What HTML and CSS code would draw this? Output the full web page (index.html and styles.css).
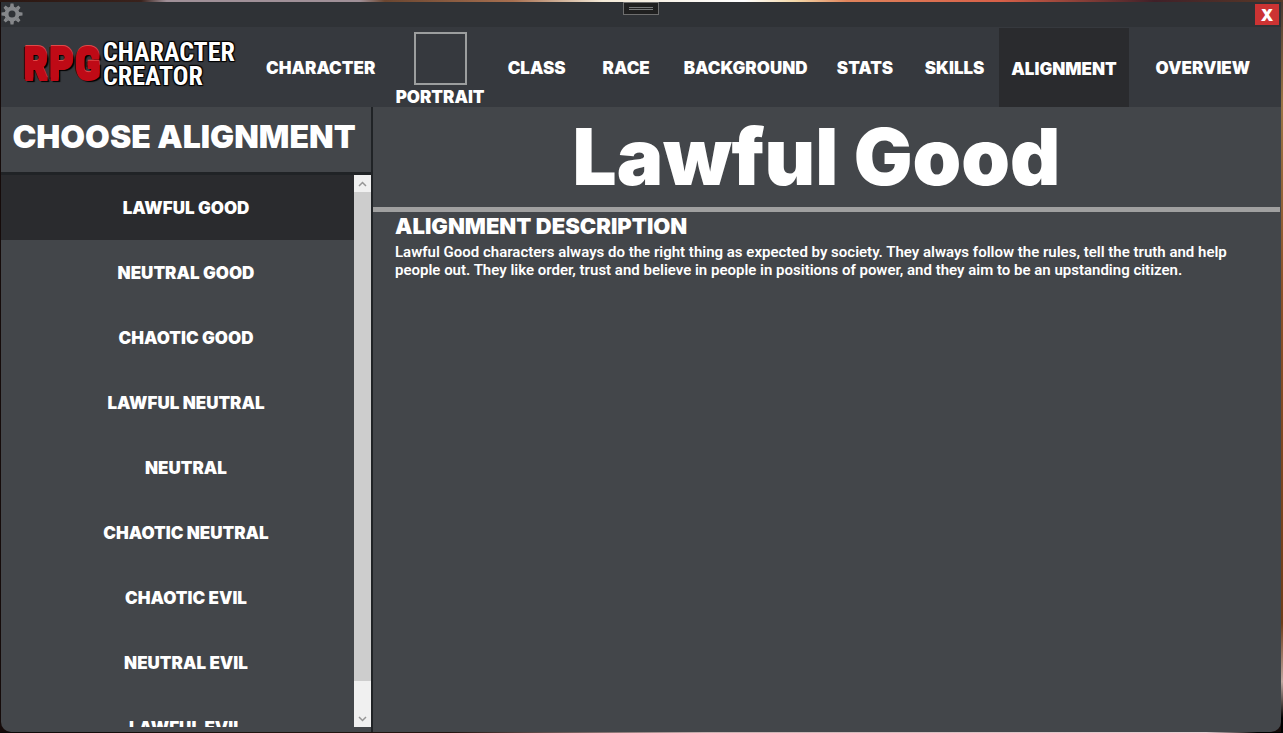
FILE: index.html
```html
<!DOCTYPE html>
<html lang="en">
<head>
<meta charset="utf-8">
<title>RPG Character Creator</title>
<link rel="stylesheet" href="styles.css">
</head>
<body>
<div class="window">
  <header class="titlebar">
    <button class="settings" aria-label="Settings">
      <svg width="22" height="22" viewBox="-11 -11 22 22" aria-hidden="true">
        <circle r="5.500" fill="none" stroke="currentColor" stroke-width="4"/>
        <g fill="currentColor">
          <path id="teeth" d="M-2-7L-1.500-10.500H1.500L2-7ZM-2 7L-1.500 10.500H1.500L2 7ZM-7-2L-10.500-1.500V1.500L-7 2ZM7-2L10.500-1.500V1.500L7 2Z"/>
          <use href="#teeth" transform="rotate(45)"/>
        </g>
      </svg>
    </button>
    <button class="grip" aria-label="Toolbar"><span class="grip-lines"></span></button>
    <button class="close" aria-label="Close">X</button>
  </header>
  <div class="topbar">
    <div class="logo">
      <span class="logo-mark">RPG</span>
      <span class="logo-name">CHARACTER<br>CREATOR</span>
    </div>
    <nav class="tabs">
      <button class="tab tab-character">CHARACTER</button>
      <button class="tab tab-portrait"><span class="frame"></span>PORTRAIT</button>
      <button class="tab">CLASS</button>
      <button class="tab">RACE</button>
      <button class="tab tab-wide">BACKGROUND</button>
      <button class="tab">STATS</button>
      <button class="tab">SKILLS</button>
      <button class="tab tab-active">ALIGNMENT</button>
      <button class="tab tab-last">OVERVIEW</button>
    </nav>
  </div>
  <div class="content">
    <aside class="sidebar">
      <h2 class="sidebar-title">CHOOSE ALIGNMENT</h2>
      <div class="list-area">
        <div class="list">
          <button class="option option-active">LAWFUL GOOD</button>
          <button class="option">NEUTRAL GOOD</button>
          <button class="option">CHAOTIC GOOD</button>
          <button class="option">LAWFUL NEUTRAL</button>
          <button class="option">NEUTRAL</button>
          <button class="option">CHAOTIC NEUTRAL</button>
          <button class="option">CHAOTIC EVIL</button>
          <button class="option">NEUTRAL EVIL</button>
          <button class="option">LAWFUL EVIL</button>
        </div>
        <div class="scrollbar">
          <button class="arrow" aria-label="Scroll up"><svg width="9" height="6" viewBox="0 0 9 6"><path d="M1 5L4.500 1.500L8 5" fill="none" stroke="currentColor" stroke-width="1.500"/></svg></button>
          <div class="track"><div class="thumb"></div></div>
          <button class="arrow" aria-label="Scroll down"><svg width="9" height="6" viewBox="0 0 9 6"><path d="M1 1L4.500 4.500L8 1" fill="none" stroke="currentColor" stroke-width="1.500"/></svg></button>
        </div>
      </div>
    </aside>
    <main class="detail">
      <h1 class="detail-title">Lawful Good</h1>
      <section class="description">
        <h3 class="description-title">ALIGNMENT DESCRIPTION</h3>
        <p class="description-text">Lawful Good characters always do the right thing as expected by society. They always follow the rules, tell the truth and help people out. They like order, trust and believe in people in positions of power, and they aim to be an upstanding citizen.</p>
      </section>
    </main>
  </div>
</div>
</body>
</html>
```
FILE: styles.css
```css
* {
  box-sizing: border-box;
}

body {
  margin: 0;
  height: 100vh;
  padding: 2px 2px 1px 1px;
  background:
    linear-gradient(90deg, #2a1712 0, #3a221c 11%, #a09098 13%, #a09098 28%, #6b4630 30%, #a87050 40%, #f4ead8 47%, #fff 58%, #f4d8a8 62%, #e0845c 66%, #d86048 78%, #402028 90%, #5a3a28 100%) top / 100% 2px no-repeat,
    linear-gradient(90deg, #0c0808 0, #201410 20%, #241410 35%, #c8b0b0 55%, #e8d0d4 94%, #000 98%) bottom / 100% 1px no-repeat,
    linear-gradient(#4a3830 0, #9a7444 14%, #8a5028 40%, #6e3c18 85%, #c0a8a0 93%, #000 98%) right / 2px 100% no-repeat,
    #150b0a;
  font-family: Inter, "Liberation Sans", sans-serif;
  color: #fff;
}

button {
  padding: 0;
  border: 0;
  background: none;
  color: inherit;
  font: inherit;
}

.window {
  display: flex;
  flex-direction: column;
  height: 100%;
  overflow: hidden;
  border-radius: 0 0 10px 10px;
  background: #43464a;
}

.titlebar {
  display: grid;
  grid-template-columns: 1fr auto 1fr;
  align-items: start;
  flex: none;
  height: 25px;
  background: #2f3236;
}

.settings {
  justify-self: start;
  height: 22px;
  margin-top: 1px;
  color: #85878a;
}

.settings svg,
.arrow svg {
  display: block;
}

.grip {
  width: 36px;
  height: 13px;
  padding: 4px 5px;
  border: 1px solid #6e6e6e;
  background: #202020;
}

.grip-lines {
  display: block;
  height: 3px;
  border: solid #77797a;
  border-width: 1px 0;
}

.close {
  justify-self: end;
  width: 24px;
  height: 21px;
  margin: 2px 2px 0 0;
  background: #cc3333;
  font-size: 16px;
  font-weight: 900;
  line-height: 20px;
}

.topbar {
  display: flex;
  flex: none;
  height: 80px;
  background: #36393e;
}

.logo {
  display: flex;
  align-items: center;
  flex: none;
  gap: 2px;
  width: 252px;
  padding-left: 22px;
  padding-bottom: 7px;
  font-family: "Liberation Sans Narrow", "Roboto Condensed", "Liberation Sans", sans-serif;
  font-weight: 700;
  white-space: nowrap;
}

.logo-mark {
  color: #bf0a16;
  font-size: 45px;
  font-weight: 900;
  line-height: 50px;
  text-shadow: 0 1px #bf0a16, 0 2px #bf0a16, 0 -1px #bf0a16, 0 -2px #e04848, -1px 0 #300, 2px 3px 1px #000;
}

.logo-name {
  font-size: 26px;
  line-height: 24px;
  text-shadow: 1px 1px 1px #000, -1px -1px 1px #000, 1px -1px 1px #000, -1px 1px 1px #000;
}

.tabs {
  display: flex;
  flex: 1;
}

.tab {
  flex: 90 1 0;
  min-width: 0;
  padding-top: 2px;
  font-size: 17px;
  font-weight: 900;
  line-height: 22px;
  white-space: nowrap;
}

.tab-character {
  flex-grow: 136;
}

.tab-portrait {
  display: flex;
  flex-direction: column;
  align-items: center;
  flex-grow: 104;
  padding-top: 5px;
}

.frame {
  flex: none;
  width: 53px;
  height: 53px;
  margin-bottom: 1px;
  border: 2px solid #9c9e9e;
}

.tab-wide {
  flex-grow: 150;
}

.tab-active {
  flex-grow: 130;
  margin-top: 1px;
  background: #2a2b2e;
}

.tab-last {
  flex-grow: 149;
  padding-right: 4px;
}

.content {
  display: flex;
  flex: 1;
  min-height: 0;
}

.sidebar {
  display: flex;
  flex-direction: column;
  flex: 0 0 372px;
  padding-bottom: 5px;
  border-right: 2px solid #202326;
}

.sidebar-title {
  flex: none;
  height: 68px;
  margin: 0;
  border-bottom: 3px solid #202326;
  padding-right: 4px;
  font-size: 32px;
  font-weight: 900;
  line-height: 60px;
  text-align: center;
  white-space: nowrap;
}

.list-area {
  display: flex;
  flex: 1;
  min-height: 0;
}

.list {
  display: flex;
  flex-direction: column;
  flex: 1;
  overflow: hidden;
}

.option {
  flex: none;
  height: 65px;
  padding-left: 17px;
  font-size: 17px;
  font-weight: 900;
}

.option-active {
  background: #2a2b2e;
}

.scrollbar {
  display: flex;
  flex-direction: column;
  width: 17px;
  background: #f0f0f0;
}

.arrow {
  display: grid;
  place-items: center;
  flex: none;
  height: 17px;
  color: #969696;
}

.track {
  flex: 1;
}

.thumb {
  height: 94.400%;
  background: #cdcdcd;
}

.detail {
  flex: 1;
  min-width: 0;
}

.detail-title {
  height: 105px;
  margin: 0 1px 0 0;
  border-bottom: 5px solid #a0a0a0;
  padding-right: 20px;
  font-size: 78px;
  font-weight: 900;
  line-height: 100px;
  text-align: center;
  white-space: nowrap;
}

.description {
  padding: 0 30px 0 22px;
}

.description-title {
  margin: 0;
  padding-bottom: 2px;
  font-size: 22px;
  font-weight: 900;
  line-height: 29px;
}

.description-text {
  margin: 0;
  font-family: Roboto, "Liberation Sans", sans-serif;
  font-size: 15px;
  font-weight: 600;
  line-height: 18px;
}
```
